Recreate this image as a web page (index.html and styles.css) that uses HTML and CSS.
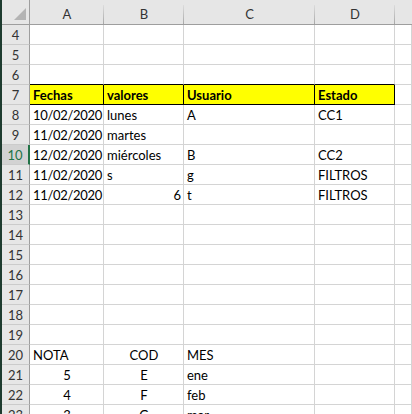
FILE: index.html
```html
<!DOCTYPE html>
<html lang="es">
<head>
<meta charset="utf-8">
<link rel="stylesheet" href="styles.css">
</head>
<body>
<div class="sheet">
  <div class="strip"></div>
  <div class="grid">
    <div class="corner"><span class="tri"></span></div>
    <div class="ch">A</div><div class="ch">B</div><div class="ch">C</div><div class="ch">D</div><div class="ch last"></div>

    <div class="rh">4</div><div class="c"></div><div class="c"></div><div class="c"></div><div class="c"></div><div class="c"></div>
    <div class="rh">5</div><div class="c"></div><div class="c"></div><div class="c"></div><div class="c"></div><div class="c"></div>
    <div class="rh">6</div><div class="c tb"></div><div class="c tb"></div><div class="c tb"></div><div class="c tb"></div><div class="c"></div>

    <div class="rh">7</div><div class="c y">Fechas</div><div class="c y">valores</div><div class="c y">Usuario</div><div class="c y">Estado</div><div class="c"></div>

    <div class="rh">8</div><div class="c d">10/02/2020</div><div class="c">lunes</div><div class="c">A</div><div class="c">CC1</div><div class="c"></div>
    <div class="rh">9</div><div class="c d">11/02/2020</div><div class="c">martes</div><div class="c"></div><div class="c"></div><div class="c"></div>
    <div class="rh sel">10</div><div class="c d">12/02/2020</div><div class="c">miércoles</div><div class="c">B</div><div class="c">CC2</div><div class="c"></div>
    <div class="rh">11</div><div class="c d">11/02/2020</div><div class="c">s</div><div class="c">g</div><div class="c">FILTROS</div><div class="c"></div>
    <div class="rh">12</div><div class="c d">11/02/2020</div><div class="c r">6</div><div class="c">t</div><div class="c">FILTROS</div><div class="c"></div>

    <div class="rh">13</div><div class="c"></div><div class="c"></div><div class="c"></div><div class="c"></div><div class="c"></div>
    <div class="rh">14</div><div class="c"></div><div class="c"></div><div class="c"></div><div class="c"></div><div class="c"></div>
    <div class="rh">15</div><div class="c"></div><div class="c"></div><div class="c"></div><div class="c"></div><div class="c"></div>
    <div class="rh">16</div><div class="c"></div><div class="c"></div><div class="c"></div><div class="c"></div><div class="c"></div>
    <div class="rh">17</div><div class="c"></div><div class="c"></div><div class="c"></div><div class="c"></div><div class="c"></div>
    <div class="rh">18</div><div class="c"></div><div class="c"></div><div class="c"></div><div class="c"></div><div class="c"></div>
    <div class="rh">19</div><div class="c"></div><div class="c"></div><div class="c"></div><div class="c"></div><div class="c"></div>

    <div class="rh">20</div><div class="c">NOTA</div><div class="c m">COD</div><div class="c">MES</div><div class="c"></div><div class="c"></div>
    <div class="rh">21</div><div class="c m">5</div><div class="c m">E</div><div class="c">ene</div><div class="c"></div><div class="c"></div>
    <div class="rh">22</div><div class="c m">4</div><div class="c m">F</div><div class="c">feb</div><div class="c"></div><div class="c"></div>
    <div class="rh">23</div><div class="c m">3</div><div class="c m">G</div><div class="c">mar</div><div class="c"></div><div class="c"></div>
  </div>
</div>
</body>
</html>
```

FILE: styles.css
```css
html, body {
  margin: 0;
  padding: 0;
  background: #ffffff;
  overflow: hidden;
  height: 414px;
}

.sheet {
  display: flex;
  height: 414px;
  font-family: Lato, "Liberation Sans", sans-serif;
  font-size: 13px;
  color: #000;
}

.strip {
  width: 2px;
  flex: none;
  background: #1e3b2f;
}

.grid {
  flex: 1;
  display: grid;
  grid-template-columns: 28px 74px 80px 131px 80px 1fr;
  grid-template-rows: 25px repeat(20, 20px);
  overflow: hidden;
}

.corner {
  background: #e6e6e6;
  border-right: 1px solid #9e9e9e;
  border-bottom: 1px solid #9e9e9e;
  display: flex;
  justify-content: flex-end;
  align-items: flex-end;
  padding: 0 3px 4px 0;
}

.tri {
  width: 12px;
  height: 12px;
  background: #b4b4b4;
  clip-path: polygon(100% 0, 100% 100%, 0 100%);
}

.ch {
  position: relative;
  background: #e6e6e6;
  border-bottom: 1px solid #9e9e9e;
  display: flex;
  align-items: center;
  justify-content: center;
  padding-top: 3px;
  color: #333;
  box-sizing: border-box;
}

.ch::after {
  content: "";
  position: absolute;
  right: 0;
  top: 5px;
  bottom: 0;
  width: 1px;
  background: linear-gradient(to bottom, #dcdcdc, #a8a8a8);
}

.ch.last::after { display: none; }

.rh {
  background: #e6e6e6;
  border-right: 1px solid #9e9e9e;
  border-bottom: 1px solid #cbcbcb;
  color: #333;
  text-align: center;
  line-height: 19px;
  padding-top: 1px;
  box-sizing: border-box;
}

.rh.sel {
  background: #d2d2d2;
  color: #217346;
  border-right: 2px solid #217346;
}

.c {
  border-right: 1px solid #d4d4d4;
  border-bottom: 1px solid #d4d4d4;
  padding: 1px 2px 0 3px;
  line-height: 19px;
  white-space: nowrap;
  box-sizing: border-box;
}

.c.d { letter-spacing: -0.3px; }

.c.tb { border-bottom-color: #000; }

.c.y {
  background: #ffff00;
  font-weight: bold;
  border-right-color: #000;
  border-bottom-color: #000;
}

.c.r { text-align: right; }
.c.m { text-align: center; }
```
